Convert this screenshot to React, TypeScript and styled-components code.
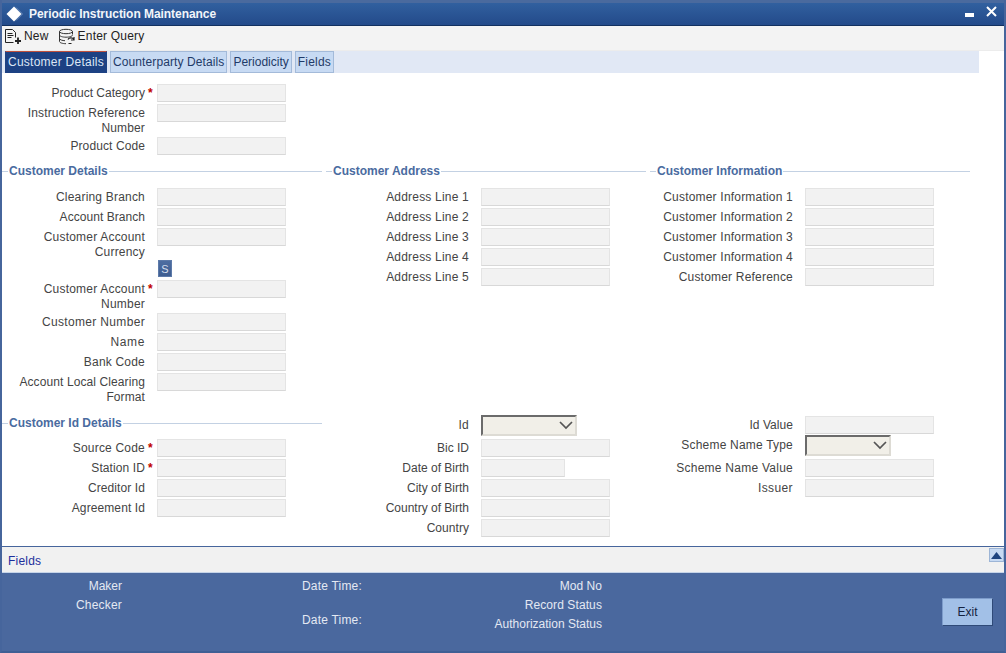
import React from 'react';
import styled, {createGlobalStyle} from 'styled-components';

const GlobalStyle = createGlobalStyle`
  html, body {
    margin: 0;
    padding: 0;
    background: #fff;
  }

  * {
    box-sizing: border-box;
  }
`

type FieldData = {
    label: string;
    required?: boolean;
    kind?: 'select' | 'short' | 'search';
    tall?: boolean;
    spacing?: number;
}

const topFields: FieldData[] = [
    {label: 'Product Category', required: true, spacing: 0},
    {label: 'Instruction Reference Number', tall: true, spacing: 0.15},
    {label: 'Product Code', spacing: 0.1},
];

const customerDetails: FieldData[] = [
    {label: 'Clearing Branch'},
    {label: 'Account Branch', spacing: 0.05},
    {label: 'Customer Account Currency', tall: true},
    {label: '', kind: 'search'},
    {label: 'Customer Account Number', required: true, tall: true},
    {label: 'Customer Number', spacing: 0.33},
    {label: 'Name', spacing: 0.6},
    {label: 'Bank Code'},
    {label: 'Account Local Clearing Format', tall: true, spacing: 0.1},
];

const customerAddress: FieldData[] = [1, 2, 3, 4, 5].map(n => ({label: `Address Line ${n}`}));

const customerInformation: FieldData[] = [
    {label: 'Customer Information 1'},
    {label: 'Customer Information 2'},
    {label: 'Customer Information 3'},
    {label: 'Customer Information 4'},
    {label: 'Customer Reference'},
];

const idDetails: FieldData[] = [
    {label: 'Source Code'  , required: true},
    {label: 'Station ID', required: true, spacing: 0.1},
    {label: 'Creditor Id', spacing: 0.1},
    {label: 'Agreement Id', spacing: 0.1},
];

const idMiddle: FieldData[] = [
    {label: 'Id', kind: 'select'},
    {label: 'Bic ID', spacing: 0},
    {label: 'Date of Birth', kind: 'short', spacing: 0},
    {label: 'City of Birth', spacing: 0},
    {label: 'Country of Birth', spacing: 0},
    {label: 'Country', spacing: 0.05},
];

const idRight: FieldData[] = [
    {label: 'Id Value', spacing: 0.05},
    {label: 'Scheme Name Type', kind: 'select'},
    {label: 'Scheme Name Value', spacing: 0.25},
    {label: 'Issuer', spacing: 0.4},
];

const Fields = ({items}: { items: FieldData[] }) => (
    <FieldList>
        {items.map((item, i) => (
            item.kind === 'search' ? (
                <SearchRow key={i}><SearchButton>S</SearchButton></SearchRow>
            ) : (
                <FieldRow key={i} $tall={item.tall} $select={item.kind === 'select'}>
                    <Label $spacing={item.spacing}>{item.label}</Label>
                    <Mark>{item.required ? '*' : ''}</Mark>
                    {item.kind === 'select' ? (
                        <SelectBox $wide={item.label === 'Id'}>
                            <svg width="14" height="9" viewBox="0 0 14 9">
                                <path d="M1 1l6 6 6-6" fill="none" stroke="#555" strokeWidth="1.7"/>
                            </svg>
                        </SelectBox>
                    ) : (
                        <TextInput $short={item.kind === 'short'} readOnly/>
                    )}
                </FieldRow>
            )
        ))}
    </FieldList>
);

const App = () => {
    return (
        <Window>
            <GlobalStyle/>
            <TitleBar>
                <svg width="18" height="18" viewBox="0 0 18 18">
                    <path d="M9 1.500l7.500 7.500-7.500 7.500L1.500 9z" fill="#fff"/>
                    <path d="M11 2.500l6.500 6.500-6.500 6.500" fill="none" stroke="#7f9cc8" strokeWidth="0.8"/>
                </svg>
                <Title>Periodic Instruction Maintenance</Title>
                <WindowControls>
                    <svg width="12" height="6" viewBox="0 0 12 6"><rect y="1" width="9" height="4" fill="#fff"/></svg>
                    <svg width="11" height="11" viewBox="0 0 11 11">
                        <path d="M1 1l9 9M10 1l-9 9" stroke="#fff" strokeWidth="2"/>
                    </svg>
                </WindowControls>
            </TitleBar>
            <Toolbar>
                <ToolItem>
                    <svg width="18" height="17" viewBox="0 0 18 17" fill="none" stroke="#222" strokeWidth="1">
                        <path d="M1.500 1.500h7l3 3v5M1.500 1.500v13h8M3.500 5.500h5M3.500 7.500h6M3.500 9.500h4"/>
                        <path d="M14 9.500v6.500M11 13h6" strokeWidth="1.800"/>
                    </svg>
                    New
                </ToolItem>
                <ToolItem>
                    <svg width="18" height="17" viewBox="0 0 18 17" fill="none" stroke="#333" strokeWidth="1">
                        <ellipse cx="8" cy="3.500" rx="6.500" ry="2.200"/>
                        <path d="M1.500 3.500v10c0 1.200 3 2.200 6.500 2.200M14.500 3.500v3M1.500 7c0 1.200 3 2.200 6.500 2.200s6.500-1 6.500-2.200M1.500 10.500c0 1.200 3 2.200 5.500 2.200"/>
                        <path d="M10 11.500c.8-2 4.500-2.500 6 0M16 9v3h-3M10.500 15.500h3" stroke="#222" strokeWidth="1.200"/>
                    </svg>
                    Enter Query
                </ToolItem>
            </Toolbar>
            <TabBar>
                <Tab $active $spacing={0.25}>Customer Details</Tab>
                <Tab $spacing={0.1}>Counterparty Details</Tab>
                <Tab $spacing={0}>Periodicity</Tab>
                <Tab>Fields</Tab>
            </TabBar>
            <Content>
                <TopBlock>
                    <Fields items={topFields}/>
                </TopBlock>
                <SectionGrid>
                    <Section>
                        <Legend>Customer Details</Legend>
                        <Fields items={customerDetails}/>
                    </Section>
                    <Section>
                        <Legend>Customer Address</Legend>
                        <Fields items={customerAddress}/>
                    </Section>
                    <Section>
                        <Legend>Customer Information</Legend>
                        <Fields items={customerInformation}/>
                    </Section>
                </SectionGrid>
                <IdGrid>
                    <Section>
                        <Legend>Customer Id Details</Legend>
                        <Fields items={idDetails}/>
                    </Section>
                    <Fields items={idMiddle}/>
                    <Fields items={idRight}/>
                </IdGrid>
            </Content>
            <FieldsBar>
                <FieldsLink>Fields</FieldsLink>
                <CollapseButton>
                    <svg width="11" height="7" viewBox="0 0 11 7"><path d="M5.500 0L11 7H0z" fill="#1f4580"/></svg>
                </CollapseButton>
            </FieldsBar>
            <Footer>
                <MakerColumn>
                    <FooterLabel $spacing={0}>Maker</FooterLabel>
                    <FooterLabel>Checker</FooterLabel>
                </MakerColumn>
                <DateColumn>
                    <FooterLabel>Date Time:</FooterLabel>
                    <FooterLabel>Date Time:</FooterLabel>
                </DateColumn>
                <StatusColumn>
                    <FooterLabel $spacing={0.05}>Mod No</FooterLabel>
                    <FooterLabel $spacing={0.1}>Record Status</FooterLabel>
                    <FooterLabel $spacing={0}>Authorization Status</FooterLabel>
                </StatusColumn>
                <ExitButton>Exit</ExitButton>
            </Footer>
        </Window>
    );
};

export default App;

const Window = styled.div`
  width: 1006px;
  height: 653px;
  display: flex;
  flex-direction: column;
  background: #fff;
  border-left: 2px solid #46659c;
  border-right: 2px solid #46659c;
  border-bottom: 2px solid #3f5f94;
  font-family: "Liberation Sans", Arial, sans-serif;
  font-size: 12px;
  letter-spacing: 0.2px;
  overflow: hidden;
`

const TitleBar = styled.div`
  flex: none;
  height: 26px;
  display: flex;
  align-items: center;
  gap: 10px;
  padding: 0 7px 0 3px;
  background: linear-gradient(#31609f, #234a8a);
  border-top: 3px solid #4a6a9e;
  border-bottom: 1px solid #12305f;

  svg {
    display: block;
  }
`

const Title = styled.div`
  color: #f2f5fa;
  font-weight: 700;
  font-size: 12px;
  letter-spacing: -0.05px;
  margin-left: -4px;
`

const WindowControls = styled.div`
  margin-left: auto;
  display: flex;
  align-items: center;
  gap: 9px;
  margin-top: -6px;

  svg:first-child {
    margin-top: 8px;
  }
`

const Toolbar = styled.div`
  flex: none;
  height: 25px;
  display: flex;
  align-items: center;
  gap: 9px;
  padding: 0 2px 4px;
  background: #f3f3f3;
  border-bottom: 1px solid #ececec;
`

const ToolItem = styled.div`
  display: flex;
  align-items: center;
  gap: 2px;
  color: #222;
`

const TabBar = styled.div`
  flex: none;
  width: 977px;
  height: 22px;
  display: flex;
  align-items: stretch;
  gap: 3px;
  padding-left: 3px;
  background: #e1e8f5;
`

const Tab = styled.div<{ $active?: boolean; $spacing?: number }>`
  display: flex;
  align-items: center;
  padding: 0 2px;
  letter-spacing: ${props => props.$spacing ?? 0.2}px;
  color: ${props => props.$active ? '#dce6f5' : '#1f3a68'};
  background: ${props => props.$active ? '#1d4183' : '#c7daf3'};
  border: 1px solid ${props => props.$active ? '#1d4183' : '#a3bad9'};
  border-top-color: ${props => props.$active ? '#c0503c' : '#a3bad9'};
`

const Content = styled.div`
  flex: 1;
  min-height: 0;
  padding-top: 11px;
`

const TopBlock = styled.div`
  width: 320px;
`

const SectionGrid = styled.div`
  display: grid;
  grid-template-columns: repeat(3, 320px);
  column-gap: 4px;
  margin-top: 7px;
`

const IdGrid = styled(SectionGrid)`
  margin-top: 9px;

  > ul {
    padding-top: 1px;
  }

  h3 {
    position: relative;
    top: 1px;
  }
`

const Section = styled.section``

const Legend = styled.h3`
  display: flex;
  align-items: center;
  gap: 1px;
  height: 14px;
  margin: 0 0 10px;
  color: #4a6b9f;
  font-size: 12px;
  font-weight: 700;
  letter-spacing: 0;

  &::before {
    content: "";
    width: 6px;
    height: 1px;
    background: #c3d1e3;
  }

  &::after {
    content: "";
    flex: 1;
    height: 1px;
    background: #c3d1e3;
  }
`

const FieldList = styled.ul`
  list-style: none;
  margin: 0;
  padding: 0;
  display: flex;
  flex-direction: column;
`

const FieldRow = styled.li<{ $tall?: boolean; $select?: boolean }>`
  display: grid;
  grid-template-columns: 143px 12px auto;
  align-items: start;
  height: ${props => props.$tall ? '33px' : props.$select ? '23px' : '20px'};
`

const SearchRow = styled.li`
  height: 20px;
  margin-top: -1px;
  padding-left: 156px;
`

const SearchButton = styled.div`
  width: 14px;
  height: 17px;
  display: flex;
  align-items: center;
  justify-content: center;
  background: linear-gradient(#4d6da1, #3f5e91);
  border: 1px solid #5d7aa9;
  color: #d5dfee;
  font-size: 11px;
`

const Label = styled.span<{ $spacing?: number }>`
  padding-top: 2px;
  color: #444;
  text-align: right;
  line-height: 15px;
  letter-spacing: ${props => props.$spacing ?? 0.2}px;
`

const Mark = styled.span`
  padding-left: 3px;
  padding-top: 2px;
  line-height: 15px;
  color: #c00000;
  font-weight: 700;
`

const TextInput = styled.input<{ $short?: boolean }>`
  display: block;
  width: ${props => props.$short ? '84px' : '129px'};
  height: 18px;
  margin: 0;
  padding: 0;
  background: #f2f2f2;
  border: 1px solid #e4e4e4;
  border-bottom-color: #d8d8d8;
  border-radius: 0;
  outline: none;
`

const SelectBox = styled.div<{ $wide?: boolean }>`
  width: ${props => props.$wide ? '96px' : '86px'};
  height: 21px;
  margin-top: -1px;
  display: flex;
  align-items: center;
  justify-content: flex-end;
  padding-right: 2px;
  background: #f1efe8;
  border-top: 2px solid #6b6b6b;
  border-left: 2px solid #6b6b6b;
  border-right: 2px solid #dddbd4;
  border-bottom: 2px solid #dddbd4;
`

const FieldsBar = styled.div`
  flex: none;
  height: 27px;
  display: flex;
  align-items: flex-start;
  justify-content: space-between;
  background: #f1f1f1;
  border-top: 1px solid #46659c;
  border-bottom: 1px solid #c6d4e8;
`

const FieldsLink = styled.span`
  padding: 7px 0 0 6px;
  color: #1c2f9c;
`

const CollapseButton = styled.div`
  width: 15px;
  height: 14px;
  margin-top: 1px;
  display: flex;
  align-items: center;
  justify-content: center;
  background: #c7daf3;
  border: 1px solid #9db5d6;
`

const Footer = styled.div`
  flex: none;
  height: 78px;
  display: flex;
  align-items: flex-start;
  background: #4a689e;
  color: #e4e9f3;
  padding-top: 6px;
`

const FooterLabel = styled.div<{ $spacing?: number }>`
  line-height: 15px;
  text-align: right;
  letter-spacing: ${props => props.$spacing ?? 0.2}px;
`

const MakerColumn = styled.div`
  width: 120px;
  display: flex;
  flex-direction: column;
  gap: 4px;
`

const DateColumn = styled.div`
  width: 240px;
  display: flex;
  flex-direction: column;
  gap: 19px;
`

const StatusColumn = styled.div`
  width: 240px;
  display: flex;
  flex-direction: column;
  gap: 4px;
`

const ExitButton = styled.button`
  width: 51px;
  height: 28px;
  margin: 19px 0 0 340px;
  padding: 0;
  background: #a2c0e7;
  color: #14233f;
  font: 12px "Liberation Sans", Arial, sans-serif;
  border: 1px solid #7d9ccb;
  border-right-color: #2f4a78;
  border-bottom-color: #2f4a78;
  border-radius: 0;
`
